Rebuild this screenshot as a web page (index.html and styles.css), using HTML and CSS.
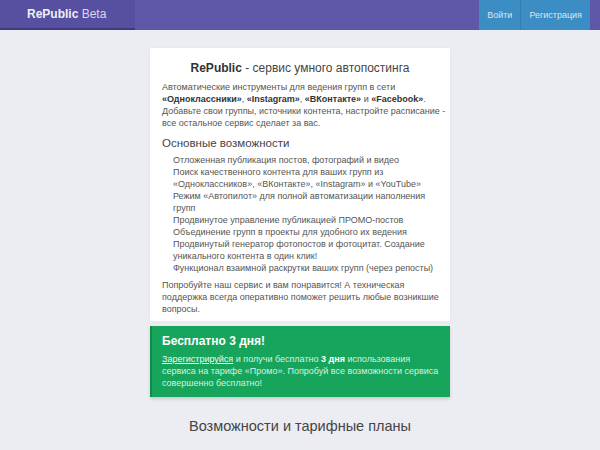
FILE: index.html
```html
<!DOCTYPE html>
<html lang="ru">
<head>
    <meta charset="UTF-8">
    <meta name="viewport" content="width=device-width, initial-scale=1.0">
    <title>RePublic - сервис умного автопостинга</title>
    <link rel="stylesheet" href="styles.css">
</head>
<body>
    <header class="topbar">
        <div class="brand"><b>RePublic</b> Beta</div>
        <nav class="auth">
            <a href="#" class="auth-btn">Войти</a>
            <a href="#" class="auth-btn">Регистрация</a>
        </nav>
    </header>

    <main class="page">
        <section class="card">
            <h1><b>RePublic</b> - сервис умного автопостинга</h1>
            <p>Автоматические инструменты для ведения групп в сети
                <b>«Одноклассники»</b>, <b>«Instagram»</b>, <b>«ВКонтакте»</b> и <b>«Facebook»</b>.
                Добавьте свои группы, источники контента, настройте расписание - все остальное сервис сделает за вас.</p>

            <h2>Основные возможности</h2>
            <ul class="features">
                <li>Отложенная публикация постов, фотографий и видео</li>
                <li>Поиск качественного контента для ваших групп из «Одноклассников», «ВКонтакте», «Instagram» и «YouTube»</li>
                <li>Режим «Автопилот» для полной автоматизации наполнения групп</li>
                <li>Продвинутое управление публикацией ПРОМО-постов</li>
                <li>Объединение групп в проекты для удобного их ведения</li>
                <li>Продвинутый генератор фотопостов и фотоцитат. Создание уникального контента в один клик!</li>
                <li>Функционал взаимной раскрутки ваших групп (через репосты)</li>
            </ul>

            <p>Попробуйте наш сервис и вам понравится! А техническая поддержка всегда оперативно поможет решить любые возникшие вопросы.</p>
        </section>

        <section class="promo">
            <h3>Бесплатно 3 дня!</h3>
            <p><a href="#">Зарегистрируйся</a> и получи бесплатно <b>3 дня</b> использования сервиса на тарифе «Промо». Попробуй все возможности сервиса совершенно бесплатно!</p>
        </section>

        <h2 class="plans-title">Возможности и тарифные планы</h2>
    </main>
</body>
</html>
```

FILE: styles.css
```css
body {
    font-family: 'Liberation Sans', Arial, sans-serif;
    margin: 0;
    background-color: #ecedf2;
    color: #444;
}

.topbar {
    display: flex;
    justify-content: space-between;
    height: 30px;
    background-color: #5f58a8;
}

.brand {
    width: 135px;
    box-sizing: border-box;
    padding-left: 27px;
    line-height: 29px;
    font-size: 12px;
    color: #d9d7ee;
    background-color: #5750a0;
    border-bottom: 2px solid #3f3a7c;
}

.brand b {
    color: #f0eff8;
}

.auth {
    display: flex;
    margin-right: 10px;
}

.auth-btn {
    display: block;
    padding: 0 8px;
    line-height: 30px;
    font-size: 9px;
    color: #d6e8f5;
    text-decoration: none;
    background-color: #3b8dc3;
}

.auth-btn + .auth-btn {
    border-left: 1px solid #347db0;
}

.page {
    width: 300px;
    margin: 0 auto;
    padding-top: 18px;
}

.card {
    background-color: #fff;
    padding: 13px 2px 6px 12px;
    box-shadow: 0 0 4px rgba(0, 0, 0, 0.04);
}

.card h1 {
    margin: 0 10px 6px 0;
    font-size: 12px;
    font-weight: normal;
    text-align: center;
    color: #444;
}

.card h1 b {
    color: #333;
}

.card p {
    margin: 0 0 8px;
    font-size: 9px;
    line-height: 12px;
    color: #555;
}

.card p:last-child {
    margin-bottom: 0;
}

.card p b {
    color: #333;
}

.card h2 {
    margin: 0 0 5px;
    font-size: 11.5px;
    font-weight: normal;
    color: #444;
}

.features {
    list-style: none;
    margin: 0 0 5px;
    padding: 0 0 0 11px;
    font-size: 9px;
    line-height: 12px;
    color: #555;
}

.promo {
    margin-top: 5px;
    padding: 8px 4px 8px 10px;
    background-color: #17a45b;
    border-left: 2px solid #0f8c47;
    box-shadow: 0 2px 3px rgba(0, 0, 0, 0.15);
    color: #d8f0e2;
}

.promo h3 {
    margin: 0 0 5px;
    font-size: 12px;
    color: #fff;
}

.promo p {
    margin: 0;
    font-size: 9px;
    line-height: 12px;
}

.promo a {
    color: #eef8f2;
}

.promo b {
    color: #fff;
}

.plans-title {
    margin: 21px 0 0;
    font-size: 14.5px;
    font-weight: normal;
    text-align: center;
    color: #444;
}
```
